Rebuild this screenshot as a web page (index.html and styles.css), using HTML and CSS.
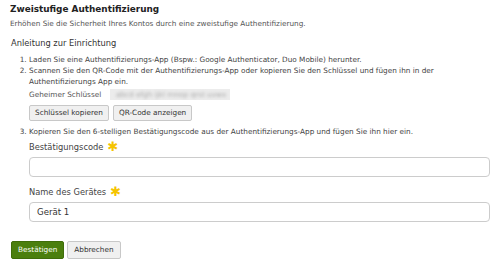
FILE: index.html
```html
<!DOCTYPE html>
<html lang="de">
<head>
<meta charset="utf-8">
<link rel="stylesheet" href="styles.css">
</head>
<body>
<div class="page">
  <h1 class="title">Zweistufige Authentifizierung</h1>
  <p class="desc">Erhöhen Sie die Sicherheit Ihres Kontos durch eine zweistufige Authentifizierung.</p>
  <h2 class="sub">Anleitung zur Einrichtung</h2>
  <ol class="steps">
    <li>Laden Sie eine Authentifizierungs-App (Bspw.: Google Authenticator, Duo Mobile) herunter.</li>
    <li>Scannen Sie den QR-Code mit der Authentifizierungs-App oder kopieren Sie den Schlüssel und fügen ihn in der Authentifizierungs App ein.
      <div class="secret">
        <span class="secret-label">Geheimer Schlüssel</span>
        <span class="secret-value"><span class="blur">abcd efgh ijkl mnop qrst uvwx</span></span>
      </div>
      <div class="btns">
        <button class="btn">Schlüssel kopieren</button>
        <button class="btn">QR-Code anzeigen</button>
      </div>
    </li>
    <li class="step3">Kopieren Sie den 6-stelligen Bestätigungscode aus der Authentifizierungs-App und fügen Sie ihn hier ein.
      <div class="field first">
        <label class="flabel">Bestätigungscode <span class="req">✱</span></label>
        <input class="input" type="text">
      </div>
      <div class="field">
        <label class="flabel">Name des Gerätes <span class="req">✱</span></label>
        <input class="input" type="text" value="Gerät 1">
      </div>
    </li>
  </ol>
  <div class="actions">
    <button class="btn primary">Bestätigen</button>
    <button class="btn">Abbrechen</button>
  </div>
</div>
</body>
</html>
```
FILE: styles.css
```css
* { box-sizing: border-box; }
html, body { margin: 0; background: #fff; }
body {
  font-family: "DejaVu Sans", Verdana, sans-serif;
  color: #444;
  font-size: 7.3px;
  line-height: 11px;
}
.page { padding: 2px 10px 0 10px; width: 500px; }
.title {
  margin: 0;
  font-size: 8.9px;
  line-height: 14px;
  font-weight: bold;
  color: #222;
}
.desc { margin: 1.5px 0 0 0; color: #555; }
.sub {
  margin: 7.5px 0 0 1px;
  font-size: 8.3px;
  line-height: 14px;
  font-weight: normal;
  color: #333;
}
.steps { margin: 4px 0 0 0; padding-left: 19px; }
.secret { display: flex; align-items: center; margin-top: 1px; height: 12px; }
.secret-label { width: 81px; color: #555; }
.secret-value {
  width: 120px; height: 11px; background: #ececec; overflow: hidden;
}
.blur {
  display: block; color: #aaa; filter: blur(1.4px); padding-left: 6px; white-space: nowrap;
}
.btns { display: flex; gap: 4px; margin-top: 5px; }
.btn {
  font-family: inherit;
  font-size: 7.3px;
  line-height: 10px;
  color: #333;
  background: #f0f0f0;
  border: 1px solid #c8c8c8;
  border-radius: 2px;
  padding: 2px 5px;
  height: 16px;
}
.step3 { margin-top: 4.5px; }
.field { margin-top: 9px; }
.field.first { margin-top: 4px; }
.flabel {
  display: flex;
  align-items: center;
  gap: 4px;
  font-size: 8.3px;
  line-height: 12px;
  height: 12px;
  color: #444;
}
.req { color: #f5c400; font-size: 13px; line-height: 12px; }
.input {
  display: block;
  width: 461px;
  height: 20px;
  margin-top: 4.5px;
  border: 1px solid #ccc;
  border-radius: 4px;
  padding: 0 7px;
  font-family: inherit;
  font-size: 8.6px;
  color: #333;
}
.field:not(.first) .input { margin-top: 4px; }
.actions { display: flex; gap: 3px; margin-top: 19px; margin-left: 1px; }
.actions .btn { height: 18px; padding: 2px 6px; }
.btn.primary { background: #4b7f0e; color: #fff; border-color: #3f6d0a; }
```
